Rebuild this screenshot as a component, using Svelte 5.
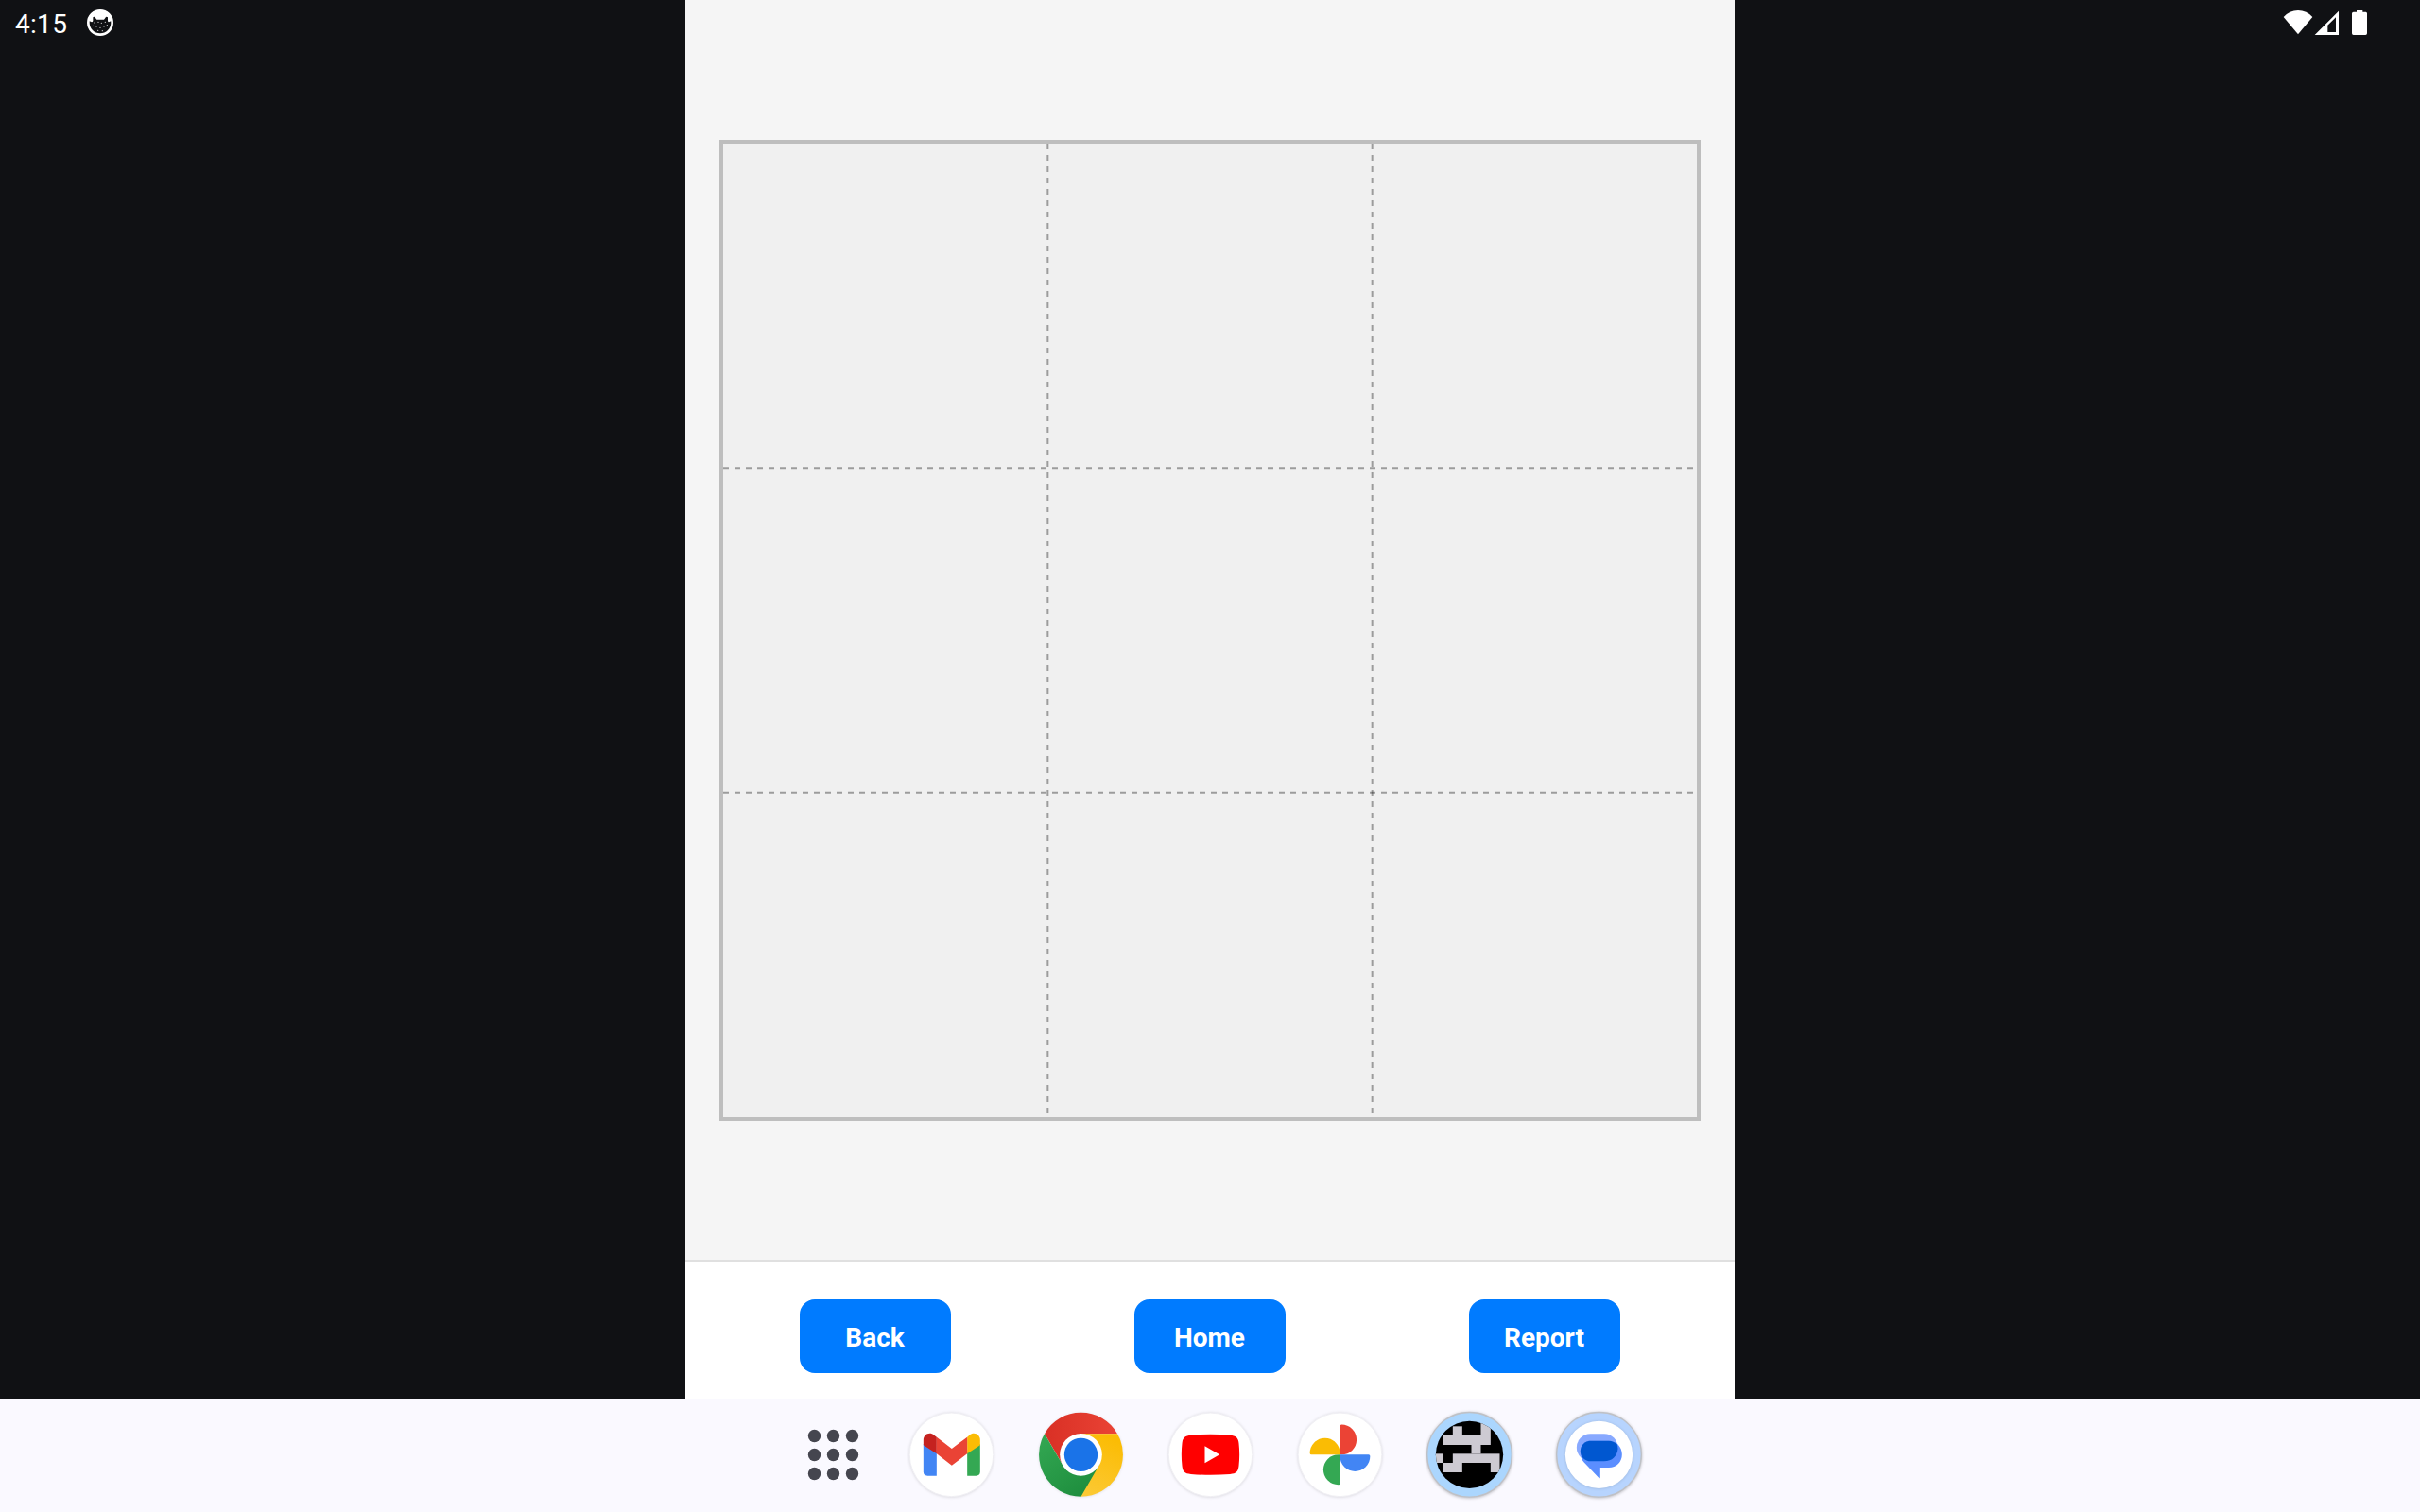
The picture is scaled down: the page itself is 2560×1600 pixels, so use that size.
<script>
  const actions = ['Back', 'Home', 'Report'];
  const dots = [-60, 0, 60];
  const blocks = [
    [36, -107, 31, 46], [-53, -90, 30, 29], [-84, -61, 151, 30], [6, -31, 30, 28],
    [-107, -3, 23, 29], [-53, -3, 149, 29], [-84, 26, 61, 30], [67, 26, 29, 30],
  ];
  const petals = [
    ['#eb4335', 0], ['#4285f4', 90], ['#34a853', 180], ['#fabc04', 270],
  ];
  const stars = [
    [300, 72], [312, 70], [322, 73], [334, 70], [306, 84], [318, 88], [330, 84], [311, 97], [325, 98], [340, 80], [296, 82],
  ];
</script>

<div class="screen">
  <header class="status">
    <div class="left">
      <span class="time">4:15</span>
      <svg class="face" viewBox="273 27 90 90">
        <circle cx="318" cy="72" r="38" fill="none" stroke="#fff" stroke-width="8" />
        <path d="M282 66Q284 33 318 32Q352 33 354 66L345 70Q343 70 342 66V55Q337 51 334 57L330 62H307L303 57Q299 51 295 55V66Q294 70 291 70Z" fill="#fff" />
        {#each stars as [x, y]}
          <circle cx={x} cy={y} r="2" fill="#d0d0d2" />
        {/each}
      </svg>
    </div>
    <svg class="system" viewBox="0 0 360 150" fill="#fff">
      <path d="M93 109L47 54Q66 33 93 33T139 54Z" />
      <path fill-rule="evenodd" d="M146 111H222V35ZM187 80V102H213V55Z" />
      <path d="M279 33H298V38H308Q312 38 312 43V106Q312 111 307 111H269Q264 111 264 106V43Q264 38 269 38H279Z" />
    </svg>
  </header>

  <main class="app">
    <section class="stage">
      <div class="board">
        <svg viewBox="0 0 1030 1030">
          <g stroke="#000" stroke-opacity="0.35" stroke-width="2" stroke-dasharray="6 6">
            <line x1="343.333" y1="0" x2="343.333" y2="1030" />
            <line x1="686.667" y1="0" x2="686.667" y2="1030" />
            <line x1="0" y1="343.333" x2="1030" y2="343.333" />
            <line x1="0" y1="686.667" x2="1030" y2="686.667" />
          </g>
        </svg>
      </div>
    </section>
    <nav class="actions">
      {#each actions as label}
        <div class="slot"><button>{label}</button></div>
      {/each}
    </nav>
  </main>

  <footer class="taskbar">
    <svg class="launcher" viewBox="-187.500 -178.500 375 360">
      {#each dots as y}
        {#each dots as x}
          <circle cx={x} cy={y} r="20" fill="#45464f" />
        {/each}
      {/each}
    </svg>

    <!-- Mail -->
    <svg class="icon" viewBox="-205.500 -178 411 360">
      <circle class="disc" r="133" />
      <path fill="#4285f4" d="M-89-34L-47-6V67H-76Q-89 67-89 54Z" />
      <path fill="#34a853" d="M91-34L50-6V67H78Q91 67 91 54Z" />
      <path fill="#c5221f" d="M-89-30V-46C-89-65-69-74-55-62L-47-56V-3Z" />
      <path fill="#fbbc04" d="M91-30V-46C91-65 71-74 57-62L50-56V-3Z" />
      <path fill="#ea4335" d="M-47-56L1-19L50-56V-3L1 34L-47-3Z" />
    </svg>

    <!-- Browser -->
    <svg class="icon" viewBox="-205.500 -178 411 360">
      <defs>
        <linearGradient id="r"><stop offset="0" stop-color="#d93025" /><stop offset="1" stop-color="#ea4335" /></linearGradient>
        <linearGradient id="g" x1="0" y1="0" x2="0.700" y2="1"><stop offset="0" stop-color="#34a853" /><stop offset="1" stop-color="#1e8e3e" /></linearGradient>
        <linearGradient id="y" x1="0.500" y1="0" x2="0.200" y2="1"><stop offset="0" stop-color="#fbbc04" /><stop offset="1" stop-color="#fcc934" /></linearGradient>
      </defs>
      <circle class="disc" r="131" />
      <path fill="url(#r)" d="M-115.500-66.500A133 133 0 0 1 115.500-66.500H0V0L-57.600 33.200Z" />
      <path fill="url(#y)" d="M115.500-66.500A133 133 0 0 1 0 133L0 0V-66.500Z" />
      <path fill="url(#g)" d="M0 133A133 133 0 0 1-115.500-66.500L-57.600 33.200L0 0L57.600 33.200Z" />
      <circle r="67" fill="#fff" />
      <circle r="53" fill="#1a73e8" />
    </svg>

    <!-- Video -->
    <svg class="icon" viewBox="-205.500 -178 411 360">
      <circle class="disc" r="133" />
      <path fill="#f00" d="M-62-62Q0-67 62-62C82-60 88-54 90-36Q94 0 90 36C88 54 82 60 62 62Q0 67-62 62C-82 60-88 54-90 36Q-94 0-90-36C-88-54-82-60-62-62Z" />
      <path fill="#fff" d="M-18-27V27L29 0Z" />
    </svg>

    <!-- Photos -->
    <svg class="icon" viewBox="-205.500 -178 411 360">
      <circle class="disc" r="133" />
      {#each petals as [fill, turn]}
        <path {fill} transform="rotate({turn})" d="M0-91Q0-95.500 5-95.500A47.700 47.700 0 0 1 5 0H0Z" />
      {/each}
    </svg>

    <!-- Block puzzle -->
    <svg class="icon" viewBox="-205.500 -178 411 360">
      <clipPath id="round"><circle r="107" /></clipPath>
      <circle class="ring" r="134.500" fill="#abd6fe" />
      <circle r="107" fill="#000" />
      <g clip-path="url(#round)" fill="#cdcad2">
        {#each blocks as [x, y, w, h]}
          <rect {x} {y} width={w} height={h} />
        {/each}
      </g>
    </svg>

    <!-- Messages -->
    <svg class="icon" viewBox="-205.500 -178 411 360">
      <circle class="ring" r="134.500" fill="#b7d4fe" />
      <circle class="disc inner" r="107" />
      <rect x="-71" y="-66" width="131" height="87" rx="43.500" fill="#88a9ff" />
      <path fill="#5b8eff" d="M-26-44H31C56-44 73-24 73-1C73 23 56 41 31 41H4V71Q4 77-1 73L-48 24C-55 16-59 4-59-11C-59-30-44-44-26-44Z" />
      <path fill="#0057d0" d="M-26-44H31Q46-44 57-33Q60-27 60-19C58 4 42 21 16 21H-26C-45 21-59 7-59-11C-59-30-45-44-26-44Z" />
    </svg>
  </footer>
</div>

<style>
  :global(body) { margin: 0; }
  .screen {
    width: 2560px;
    height: 1600px;
    display: grid;
    grid-template: 1480px 120px / 725px 1110px 725px;
    background: #101114;
    font-family: Roboto, sans-serif;
    overflow: hidden;
  }
  .status {
    grid-area: 1 / 1 / 2 / 4;
    height: 50px;
    display: flex;
    justify-content: space-between;
  }
  .left { display: flex; padding-left: 16px; }
  .time {
    width: 75px;
    color: #fff;
    font-size: 28px;
    line-height: 52px;
    letter-spacing: 0.3px;
  }
  .face { width: 30px; height: 30px; margin-top: 9px; }
  .system { width: 120px; height: 50px; margin-right: 40px; }
  .app {
    grid-area: 1 / 2 / 2 / 3;
    display: flex;
    flex-direction: column;
    background: #f5f5f5;
  }
  .stage {
    flex: 1;
    display: flex;
    align-items: center;
    justify-content: center;
    padding-top: 1px;
  }
  .board {
    width: 1030px;
    height: 1030px;
    border: 4px solid #bebebe;
    background: #f0f0f0;
  }
  svg { display: block; flex: none; }
  .actions {
    display: flex;
    box-sizing: border-box;
    height: 147px;
    padding: 40px 24px 0;
    border-top: 2px solid #e0e0e0;
    background: #fff;
  }
  .slot { flex: 1; display: flex; justify-content: center; }
  button {
    width: 160px;
    height: 78px;
    padding: 3px 1px 0 0;
    border: 0;
    border-radius: 16px;
    background: #007bff;
    color: #fff;
    font: bold 28px Roboto, sans-serif;
  }
  .taskbar {
    grid-area: 2 / 1 / 3 / 4;
    display: flex;
    padding-left: 819px;
    background: #faf9ff;
  }
  .launcher { width: 125px; height: 120px; margin-right: -6px; }
  .icon { width: 137px; height: 120px; }
  .disc {
    fill: #fff;
    stroke: #efeef3;
    stroke-width: 3px;
    filter: drop-shadow(0 1px 5px rgb(0 0 0 / 0.14));
  }
  .inner { stroke: none; }
  .ring {
    stroke: #bfc1c6;
    stroke-width: 4px;
    filter: drop-shadow(0 2px 5px rgb(0 0 0 / 0.25));
  }
</style>
